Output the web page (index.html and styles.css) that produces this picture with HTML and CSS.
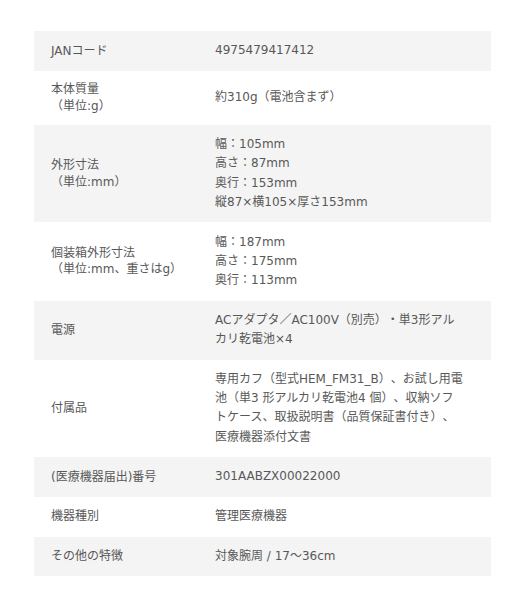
FILE: index.html
```html
<!DOCTYPE html>
<html lang="ja">
<head>
<meta charset="utf-8">
<link rel="stylesheet" href="styles.css">
</head>
<body>
<div class="wrap">
<table class="spec">
<tbody>
<tr><th>JANコード</th><td>4975479417412</td></tr>
<tr><th>本体質量<br>（単位:g）</th><td>約310g（電池含まず）</td></tr>
<tr><th>外形寸法<br>（単位:mm）</th><td>幅：105mm<br>高さ：87mm<br>奥行：153mm<br>縦87×横105×厚さ153mm</td></tr>
<tr><th>個装箱外形寸法<br>（単位:mm、重さはg）</th><td>幅：187mm<br>高さ：175mm<br>奥行：113mm</td></tr>
<tr><th>電源</th><td>ACアダプタ／AC100V（別売）・単3形アル<br>カリ乾電池×4</td></tr>
<tr><th>付属品</th><td>専用カフ（型式HEM_FM31_B）、お試し用電<br>池（単3 形アルカリ乾電池4 個）、収納ソフ<br>トケース、取扱説明書（品質保証書付き）、<br>医療機器添付文書</td></tr>
<tr><th>(医療機器届出)番号</th><td>301AABZX00022000</td></tr>
<tr><th>機器種別</th><td>管理医療機器</td></tr>
<tr><th>その他の特徴</th><td>対象腕周 / 17～36cm</td></tr>
</tbody>
</table>
</div>
</body>
</html>
```

FILE: styles.css
```css
html, body {
  margin: 0;
  padding: 0;
  background: #ffffff;
}
.wrap {
  padding: 31px 38px 0 34px;
}
.spec {
  width: 457px;
  border-collapse: collapse;
  font-family: "DejaVu Sans", "Noto Sans CJK JP", sans-serif;
  font-size: 12px;
  color: #585858;
  text-spacing-trim: space-all;
}
.spec tr:nth-child(odd) {
  background: #f4f4f4;
}
.spec th {
  width: 164px;
  padding: 10.3px 0 10.3px 17px;
  text-align: left;
  font-weight: normal;
  line-height: 16.8px;
  vertical-align: middle;
  white-space: nowrap;
}
.spec td {
  padding: 10.3px 10px 10.3px 0;
  line-height: 19.2px;
  vertical-align: middle;
  white-space: nowrap;
}
```
